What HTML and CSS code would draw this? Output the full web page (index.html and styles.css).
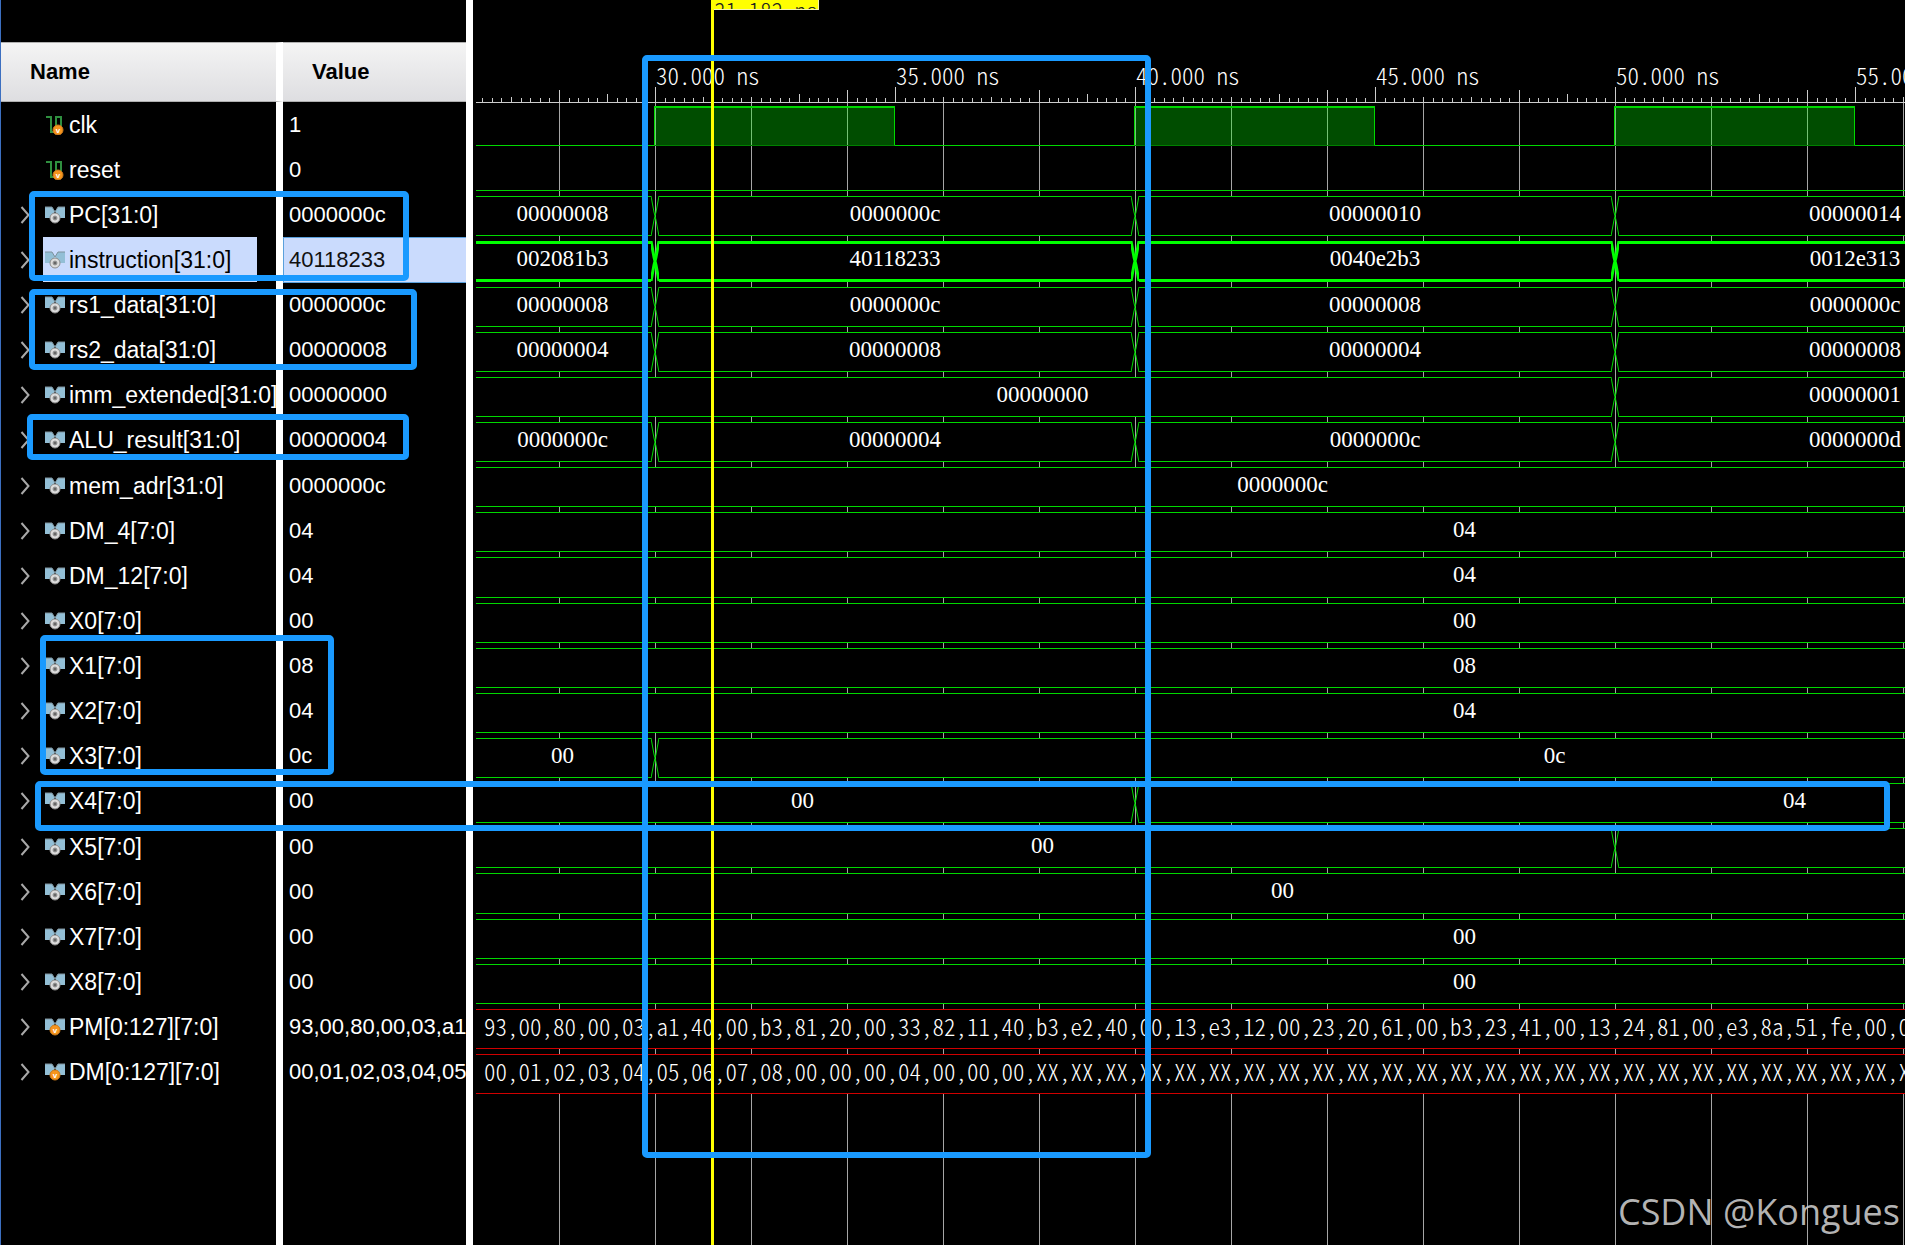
FILE: index.html
```html
<!DOCTYPE html>
<html lang="en">
<head>
<meta charset="utf-8">
<title>Waveform viewer</title>
<link rel="stylesheet" href="styles.css">
</head>
<body>
<svg class="defs" aria-hidden="true">
  <symbol id="chevron" viewBox="0 0 10 18"><path d="M1 1l7 8-7 8" fill="none" stroke="#a8a8a8" stroke-width="2"/></symbol>
  <symbol id="flags" viewBox="0 0 20 18">
    <path d="M0 1h7l4 6-4 5H0zM20 1h-7l-4 6 4 5h7z" fill="#93bfd6"/>
    <path d="M0 1h7l3 5 3-5h7" fill="none" stroke="#7e929c"/>
  </symbol>
  <symbol id="bus" viewBox="0 0 20 18">
    <use href="#flags"/>
    <circle cx="10" cy="12" r="5" fill="#dcdcdc" stroke="#8c8c8c"/>
    <circle cx="10" cy="12" r="2" fill="#666" stroke="#999"/>
  </symbol>
  <symbol id="memory" viewBox="0 0 20 18">
    <use href="#flags"/>
    <circle cx="10" cy="12" r="5" fill="#f7941d" stroke="#c97a1c"/>
    <text class="mark" x="10" y="15">v</text>
  </symbol>
  <symbol id="wire" viewBox="0 0 20 20">
    <path d="M1 2h5v15h5V2h5v12" fill="none" stroke="#2f8f3f" stroke-width="2"/>
    <circle cx="13" cy="15" r="5" fill="#f7941d" stroke="#c97a1c"/>
    <text class="mark" x="13" y="18">v</text>
  </symbol>
  <symbol id="cross" viewBox="0 0 8 40" preserveAspectRatio="none"><path d="M0 0L3 16 5 24 8 40M8 0L5 16 3 24 0 40" fill="none" stroke="currentColor"/></symbol>
</svg>

<main class="viewer">
  <section class="signals">
    <table>
      <thead>
        <tr><th class="name" scope="col">Name</th><th class="value" scope="col">Value</th></tr>
      </thead>
      <tbody>
        <tr><td class="name"><div class="node leaf"><span class="tag"><svg class="icon"><use href="#wire"/></svg>clk</span></div></td><td class="value">1</td></tr>
        <tr><td class="name"><div class="node leaf"><span class="tag"><svg class="icon"><use href="#wire"/></svg>reset</span></div></td><td class="value">0</td></tr>
        <tr><td class="name"><div class="node"><button aria-label="Expand PC"><svg><use href="#chevron"/></svg></button><span class="tag"><svg class="icon"><use href="#bus"/></svg>PC[31:0]</span></div></td><td class="value">0000000c</td></tr>
        <tr class="selected"><td class="name"><div class="node"><button aria-label="Expand instruction"><svg><use href="#chevron"/></svg></button><span class="tag"><svg class="icon"><use href="#bus"/></svg>instruction[31:0]</span></div></td><td class="value">40118233</td></tr>
        <tr><td class="name"><div class="node"><button aria-label="Expand rs1_data"><svg><use href="#chevron"/></svg></button><span class="tag"><svg class="icon"><use href="#bus"/></svg>rs1_data[31:0]</span></div></td><td class="value">0000000c</td></tr>
        <tr><td class="name"><div class="node"><button aria-label="Expand rs2_data"><svg><use href="#chevron"/></svg></button><span class="tag"><svg class="icon"><use href="#bus"/></svg>rs2_data[31:0]</span></div></td><td class="value">00000008</td></tr>
        <tr><td class="name"><div class="node"><button aria-label="Expand imm_extended"><svg><use href="#chevron"/></svg></button><span class="tag"><svg class="icon"><use href="#bus"/></svg>imm_extended[31:0]</span></div></td><td class="value">00000000</td></tr>
        <tr><td class="name"><div class="node"><button aria-label="Expand ALU_result"><svg><use href="#chevron"/></svg></button><span class="tag"><svg class="icon"><use href="#bus"/></svg>ALU_result[31:0]</span></div></td><td class="value">00000004</td></tr>
        <tr><td class="name"><div class="node"><button aria-label="Expand mem_adr"><svg><use href="#chevron"/></svg></button><span class="tag"><svg class="icon"><use href="#bus"/></svg>mem_adr[31:0]</span></div></td><td class="value">0000000c</td></tr>
        <tr><td class="name"><div class="node"><button aria-label="Expand DM_4"><svg><use href="#chevron"/></svg></button><span class="tag"><svg class="icon"><use href="#bus"/></svg>DM_4[7:0]</span></div></td><td class="value">04</td></tr>
        <tr><td class="name"><div class="node"><button aria-label="Expand DM_12"><svg><use href="#chevron"/></svg></button><span class="tag"><svg class="icon"><use href="#bus"/></svg>DM_12[7:0]</span></div></td><td class="value">04</td></tr>
        <tr><td class="name"><div class="node"><button aria-label="Expand X0"><svg><use href="#chevron"/></svg></button><span class="tag"><svg class="icon"><use href="#bus"/></svg>X0[7:0]</span></div></td><td class="value">00</td></tr>
        <tr><td class="name"><div class="node"><button aria-label="Expand X1"><svg><use href="#chevron"/></svg></button><span class="tag"><svg class="icon"><use href="#bus"/></svg>X1[7:0]</span></div></td><td class="value">08</td></tr>
        <tr><td class="name"><div class="node"><button aria-label="Expand X2"><svg><use href="#chevron"/></svg></button><span class="tag"><svg class="icon"><use href="#bus"/></svg>X2[7:0]</span></div></td><td class="value">04</td></tr>
        <tr><td class="name"><div class="node"><button aria-label="Expand X3"><svg><use href="#chevron"/></svg></button><span class="tag"><svg class="icon"><use href="#bus"/></svg>X3[7:0]</span></div></td><td class="value">0c</td></tr>
        <tr><td class="name"><div class="node"><button aria-label="Expand X4"><svg><use href="#chevron"/></svg></button><span class="tag"><svg class="icon"><use href="#bus"/></svg>X4[7:0]</span></div></td><td class="value">00</td></tr>
        <tr><td class="name"><div class="node"><button aria-label="Expand X5"><svg><use href="#chevron"/></svg></button><span class="tag"><svg class="icon"><use href="#bus"/></svg>X5[7:0]</span></div></td><td class="value">00</td></tr>
        <tr><td class="name"><div class="node"><button aria-label="Expand X6"><svg><use href="#chevron"/></svg></button><span class="tag"><svg class="icon"><use href="#bus"/></svg>X6[7:0]</span></div></td><td class="value">00</td></tr>
        <tr><td class="name"><div class="node"><button aria-label="Expand X7"><svg><use href="#chevron"/></svg></button><span class="tag"><svg class="icon"><use href="#bus"/></svg>X7[7:0]</span></div></td><td class="value">00</td></tr>
        <tr><td class="name"><div class="node"><button aria-label="Expand X8"><svg><use href="#chevron"/></svg></button><span class="tag"><svg class="icon"><use href="#bus"/></svg>X8[7:0]</span></div></td><td class="value">00</td></tr>
        <tr><td class="name"><div class="node"><button aria-label="Expand PM"><svg><use href="#chevron"/></svg></button><span class="tag"><svg class="icon"><use href="#memory"/></svg>PM[0:127][7:0]</span></div></td><td class="value">93,00,80,00,03,a1</td></tr>
        <tr><td class="name"><div class="node"><button aria-label="Expand DM"><svg><use href="#chevron"/></svg></button><span class="tag"><svg class="icon"><use href="#memory"/></svg>DM[0:127][7:0]</span></div></td><td class="value">00,01,02,03,04,05</td></tr>
      </tbody>
    </table>
  </section>

  <section class="waves">
    <svg class="grid" aria-hidden="true">
      <defs>
        <pattern id="lines" x="86" y="0" width="96" height="100" patternUnits="userSpaceOnUse"><rect width="1" height="100" fill="#a6a6a6"/></pattern>
      </defs>
      <rect x="3" y="102" width="100%" height="100%" fill="url(#lines)"/>
    </svg>
    <svg class="ruler">
      <defs>
        <pattern id="minor" x="182" y="0" width="48" height="103" patternUnits="userSpaceOnUse"><path d="M10 98h1v4h-1zM19 98h1v4h-1zM29 98h1v4h-1zM38 98h1v4h-1z" fill="#ccc"/></pattern>
        <pattern id="major" x="182" y="0" width="480" height="103" patternUnits="userSpaceOnUse"><path d="M0 87h1v15h-1zM48 97h1v5h-1zM96 97h1v5h-1zM144 94h1v8h-1zM192 90h1v12h-1zM240 87h1v15h-1zM288 97h1v5h-1zM336 97h1v5h-1zM384 90h1v12h-1zM432 94h1v8h-1z" fill="#ccc"/></pattern>
      </defs>
      <rect x="3" width="100%" height="103" fill="url(#minor)"/>
      <rect x="3" width="100%" height="103" fill="url(#major)"/>
      <rect x="3" y="102" width="100%" height="1" fill="#ccc"/>
      <text x="183" y="85">30.000 ns</text>
      <text x="423" y="85">35.000 ns</text>
      <text x="663" y="85">40.000 ns</text>
      <text x="903" y="85">45.000 ns</text>
      <text x="1143" y="85">50.000 ns</text>
      <text x="1383" y="85">55.000 ns</text>
    </svg>
    <div class="rows">
      <div class="row clock"><i class="low first"></i><i class="high"></i><i class="low"></i><i class="high"></i><i class="low"></i><i class="high"></i><i class="low"></i></div>
      <div class="row"><i class="low rest"></i></div>
      <div class="row"><span class="seg lead">00000008</span><svg class="x"><use href="#cross"/></svg><span class="seg">0000000c</span><svg class="x"><use href="#cross"/></svg><span class="seg">00000010</span><svg class="x"><use href="#cross"/></svg><span class="seg">00000014</span></div>
      <div class="row active"><span class="seg lead">002081b3</span><svg class="x"><use href="#cross"/></svg><span class="seg">40118233</span><svg class="x"><use href="#cross"/></svg><span class="seg">0040e2b3</span><svg class="x"><use href="#cross"/></svg><span class="seg">0012e313</span></div>
      <div class="row"><span class="seg lead">00000008</span><svg class="x"><use href="#cross"/></svg><span class="seg">0000000c</span><svg class="x"><use href="#cross"/></svg><span class="seg">00000008</span><svg class="x"><use href="#cross"/></svg><span class="seg">0000000c</span></div>
      <div class="row"><span class="seg lead">00000004</span><svg class="x"><use href="#cross"/></svg><span class="seg">00000008</span><svg class="x"><use href="#cross"/></svg><span class="seg">00000004</span><svg class="x"><use href="#cross"/></svg><span class="seg">00000008</span></div>
      <div class="row"><span class="seg lead to50">00000000</span><svg class="x"><use href="#cross"/></svg><span class="seg">00000001</span></div>
      <div class="row"><span class="seg lead">0000000c</span><svg class="x"><use href="#cross"/></svg><span class="seg">00000004</span><svg class="x"><use href="#cross"/></svg><span class="seg">0000000c</span><svg class="x"><use href="#cross"/></svg><span class="seg">0000000d</span></div>
      <div class="row"><span class="seg lead to60">0000000c</span></div>
      <div class="row"><span class="seg lead to-end">04</span></div>
      <div class="row"><span class="seg lead to-end">04</span></div>
      <div class="row"><span class="seg lead to-end">00</span></div>
      <div class="row"><span class="seg lead to-end">08</span></div>
      <div class="row"><span class="seg lead to-end">04</span></div>
      <div class="row"><span class="seg lead">00</span><svg class="x"><use href="#cross"/></svg><span class="seg from30">0c</span></div>
      <div class="row"><span class="seg lead to40">00</span><svg class="x"><use href="#cross"/></svg><span class="seg from40">04</span></div>
      <div class="row"><span class="seg lead to50">00</span><svg class="x"><use href="#cross"/></svg><span class="seg"></span></div>
      <div class="row"><span class="seg lead to60">00</span></div>
      <div class="row"><span class="seg lead to-end">00</span></div>
      <div class="row"><span class="seg lead to-end">00</span></div>
      <div class="row"><span class="seg bytes">93,00,80,00,03,a1,40,00,b3,81,20,00,33,82,11,40,b3,e2,40,00,13,e3,12,00,23,20,61,00,b3,23,41,00,13,24,81,00,e3,8a,51,fe,00,00</span></div>
      <div class="row"><span class="seg bytes">00,01,02,03,04,05,06,07,08,00,00,00,04,00,00,00,XX,XX,XX,XX,XX,XX,XX,XX,XX,XX,XX,XX,XX,XX,XX,XX,XX,XX,XX,XX,XX,XX,XX,XX,XX,XX</span></div>
    </div>
    <div class="cursor"><span>31.182 ns</span></div>
  </section>

  <div class="note note-fetch"></div>
  <div class="note note-operands"></div>
  <div class="note note-alu"></div>
  <div class="note note-registers"></div>
  <div class="note note-cycle"></div>
  <div class="note note-result"></div>
  <p class="watermark">CSDN @Kongues</p>
</main>
</body>
</html>
```
FILE: styles.css
```css
:root {
  --rows-height: 993px;
  --note: #1a9aff;
  --trace: #00d800;
}

* { box-sizing: border-box; }

body {
  margin: 0;
  background: #000;
  color: #fff;
  font: 22px/26px "Liberation Sans", Arial, sans-serif;
}

.defs { display: none; }

.viewer {
  position: relative;
  display: grid;
  grid-template-columns: 473px minmax(0, 1fr);
  min-height: 100vh;
  overflow: hidden;
}

/* Name and value columns */
.signals {
  padding-top: 42px;
  border-left: 1px solid #3c6fc0;
  border-right: 7px solid #fff;
  background: linear-gradient(#fff, #fff) 275px 42px / 7px 100% no-repeat;
  overflow: hidden;
}

table {
  width: 465px;
  height: calc(var(--rows-height) + 60px);
  table-layout: fixed;
  border-collapse: separate;
  border-spacing: 0;
}

th {
  height: 60px;
  padding: 0 0 0 29px;
  background: linear-gradient(#f4f4f4, #dedee1);
  background-clip: padding-box;
  border-top: 1px solid #b0b0b0;
  border-bottom: 1px solid #b0b0b0;
  color: #000;
  text-align: left;
}

td {
  padding: 0;
  overflow: hidden;
  white-space: nowrap;
}

.name {
  width: 282px;
  border-right: 7px solid #fff;
}

td.value { padding: 0 0 0 6px; }

.node {
  display: flex;
  align-items: center;
  height: 45px;
  gap: 12px;
  padding-left: 19px;
}

.leaf { padding-left: 42px; }

.node button {
  flex: none;
  width: 11px;
  height: 18px;
  padding: 0;
  border: 0;
  background: none;
}

.node button svg { display: block; width: 11px; height: 18px; }

.tag {
  display: flex;
  align-items: center;
  gap: 4px;
  height: 45px;
  padding: 0 26px 0 2px;
  font-size: 23px;
}

.icon { flex: none; width: 20px; height: 18px; }

.leaf .icon { height: 20px; }

.mark {
  fill: #fff;
  font: bold 8px "Liberation Sans", sans-serif;
  text-anchor: middle;
}

.selected .tag { background: #cadbfd; color: #000; }

.selected .value {
  background: #cadbfd;
  box-shadow: inset 1px 1px #5aa0dc, inset 0 -1px #5aa0dc;
  color: #111;
}

/* Waveform canvas */
.waves {
  position: relative;
  overflow: hidden;
  font: 23px/26px "Liberation Serif", "Times New Roman", serif;
}

.grid {
  position: absolute;
  inset: 0;
  width: 100%;
  height: 100%;
}

.ruler {
  position: relative;
  display: block;
  width: 100%;
  height: 103px;
}

.ruler text,
.cursor span,
.bytes {
  font-family: "Noto Sans CJK SC", sans-serif;
  font-feature-settings: "hwid";
  font-weight: 300;
  font-size: 23px;
}

.ruler text { fill: #fff; }

.rows {
  position: relative;
  display: flex;
  flex-direction: column;
  height: var(--rows-height);
  margin-top: -1px;
  padding-left: 3px;
}

.row {
  flex: 1 1 0;
  min-height: 0;
  display: flex;
  padding: 4px 0 1px;
  color: var(--trace);
}

.seg {
  flex: none;
  display: flex;
  align-items: center;
  justify-content: center;
  width: 472px;
  padding-bottom: 4px;
  border: solid var(--trace);
  border-width: 1px 0;
  background: #000;
  color: #fff;
  white-space: nowrap;
}

.lead { width: 175px; padding-right: 2px; }
.to40 { width: 655px; }
.to50 { width: 1135px; }
.to60 { width: 1615px; }
.to-end { width: 1979px; }
.from30 { width: 1791px; }
.from40 { width: 1311px; }

.bytes {
  width: 1979px;
  justify-content: flex-start;
  padding-bottom: 6px;
  padding-left: 8px;
  border-color: #d00000;
}

.x { flex: none; width: 8px; height: 100%; }

.active { color: #0f0; --trace: #0f0; }
.active .seg { border-width: 3px 0; }
.active .x { stroke-width: 3px; }

.low,
.high { flex: none; border: 0 solid var(--trace); }

.low { width: 239px; border-bottom-width: 1px; }
.first { width: 178px; }
.rest { width: 1979px; }

.high {
  width: 241px;
  border-width: 2px 1px 1px;
  border-bottom-color: #008000;
  background: rgba(0, 255, 0, 0.3);
}

/* Time cursor */
.cursor {
  position: absolute;
  top: 0;
  bottom: 0;
  left: 238px;
  border-left: 3px solid #ff0;
}

.cursor span {
  display: block;
  height: 10px;
  overflow: hidden;
  width: 105px;
  border: solid #f4f4b0;
  border-width: 0 1px 1px 0;
  background: #ff0;
  color: #222;
  line-height: 20px;
  white-space: nowrap;
}

/* Annotation frames */
.note {
  position: absolute;
  border: 6px solid var(--note);
  border-radius: 5px;
}

.note-fetch { left: 29px; top: 191px; width: 380px; height: 90px; }
.note-operands { left: 29px; top: 289px; width: 388px; height: 81px; }
.note-alu { left: 27px; top: 414px; width: 382px; height: 46px; }
.note-registers { left: 40px; top: 635px; width: 294px; height: 140px; }
.note-cycle { left: 642px; top: 55px; width: 509px; height: 1103px; }
.note-result { left: 35px; top: 781px; width: 1855px; height: 50px; }

.watermark {
  position: absolute;
  right: 5px;
  bottom: 11px;
  margin: 0;
  color: rgba(205, 205, 205, 0.88);
  font: 36px/44px "Open Sans", "Noto Sans", sans-serif;
}
```
